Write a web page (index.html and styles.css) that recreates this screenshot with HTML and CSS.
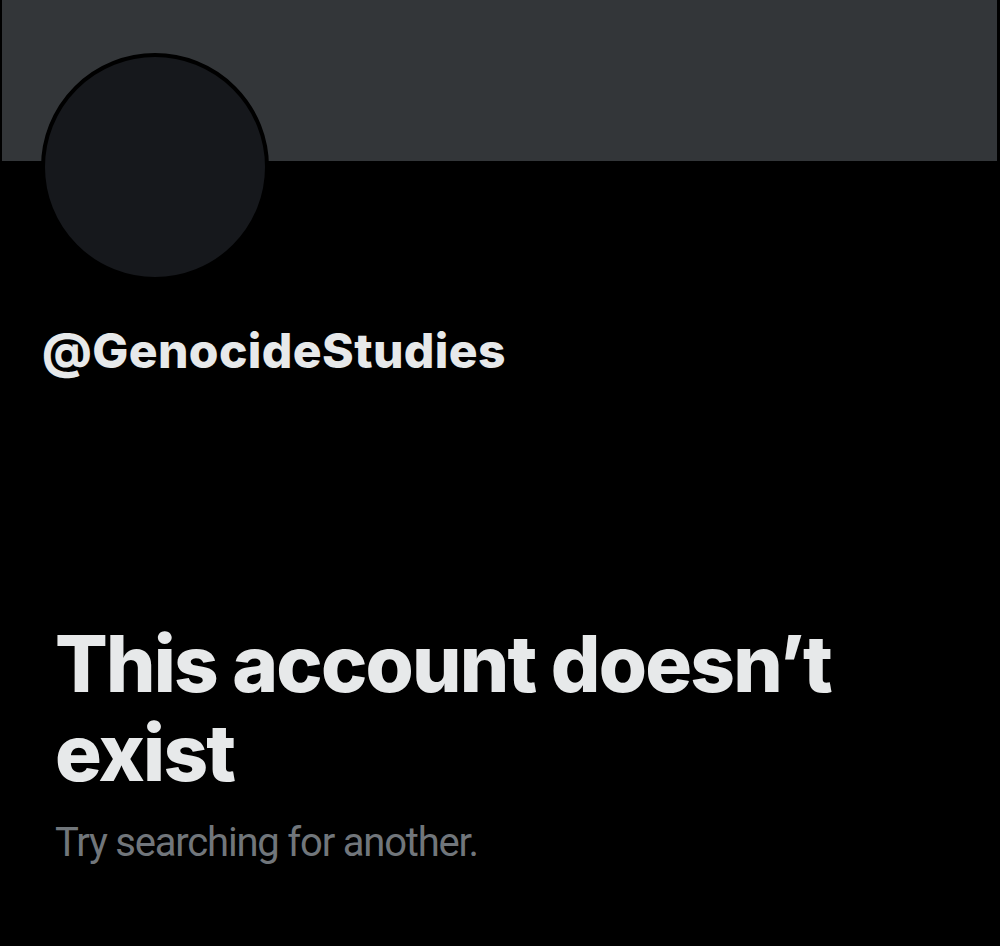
FILE: index.html
```html
<!DOCTYPE html>
<html lang="en">
<head>
    <meta charset="UTF-8">
    <meta name="viewport" content="width=device-width, initial-scale=1.0">
    <title>@GenocideStudies</title>
    <link rel="stylesheet" href="styles.css">
</head>
<body>
    <header class="banner"></header>
    <section class="profile">
        <div class="avatar"></div>
        <h2 class="handle">@GenocideStudies</h2>
    </section>
    <main class="empty-state">
        <h1 class="empty-title">This account doesn’t exist</h1>
        <p class="empty-text">Try searching for another.</p>
    </main>
</body>
</html>
```

FILE: styles.css
```css
body {
    margin: 0;
    padding: 0;
    background-color: #000;
    color: #e7e9ea;
    font-family: Inter, Roboto, "Liberation Sans", sans-serif;
    width: 1000px;
    height: 946px;
    overflow: hidden;
}
.banner {
    height: 161px;
    margin: 0 3px 0 2px;
    background-color: #333639;
}
.profile {
    padding: 0 0 0 41px;
    margin-top: -108px;
}
.avatar {
    width: 220px;
    height: 220px;
    border-radius: 50%;
    border: 4px solid #000;
    background-color: #16181c;
}
.handle {
    margin: 42px 0 0 1px;
    font-size: 48px;
    font-weight: 800;
    line-height: 56px;
    letter-spacing: 0.4px;
}
.empty-state {
    padding: 0 55px;
    margin-top: 240px;
}
.empty-title {
    margin: 0;
    font-size: 78px;
    font-weight: 800;
    line-height: 89px;
    letter-spacing: -1.8px;
}
.empty-text {
    margin: 22px 0 0;
    font-family: Roboto, "Liberation Sans", sans-serif;
    font-size: 40px;
    letter-spacing: -1.2px;
    color: #71767b;
}
```
